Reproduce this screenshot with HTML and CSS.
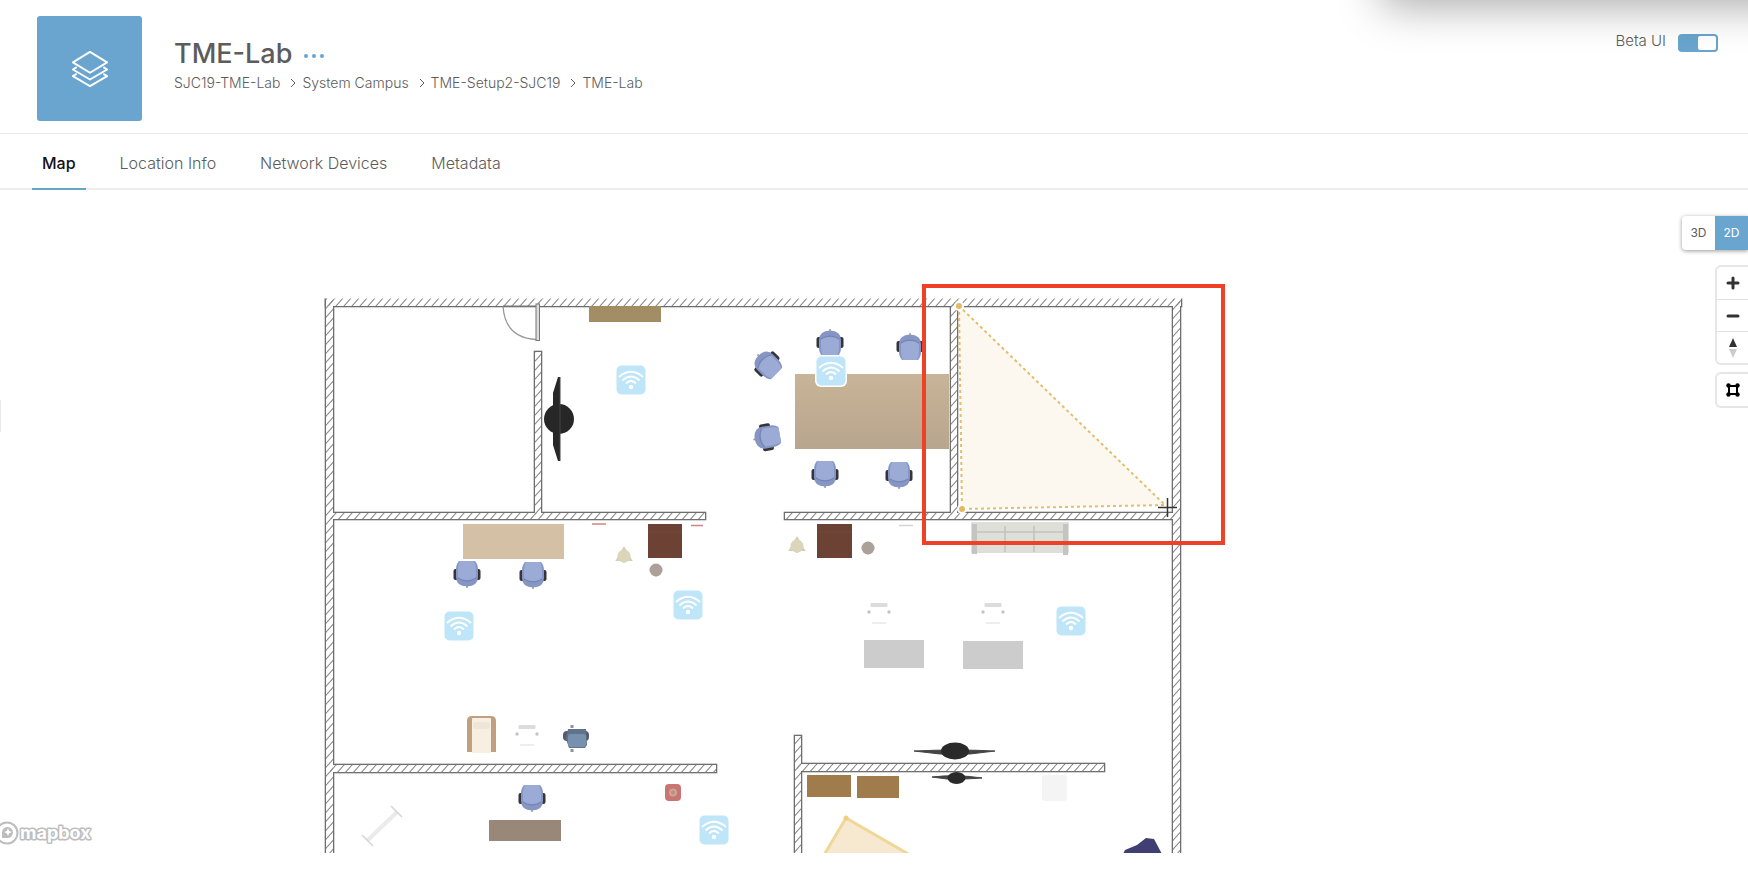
FILE: index.html
```html
<!DOCTYPE html>
<html lang="en">
<head>
<meta charset="utf-8">
<title>TME-Lab</title>
<link rel="stylesheet" href="styles.css">
</head>
<body>
<div class="page">
  <div class="shade"></div>
  <header class="header">
    <div class="tile">
      <svg width="38" height="38" viewBox="0 0 40 40" fill="none" stroke="#fff" stroke-width="2" stroke-linejoin="round">
        <path d="M20 2 38 13 20 24 2 13Z"/>
        <path d="M6 18 2 20.500 20 31 38 20.500 34 18"/>
        <path d="M6 25 2 27.500 20 38 38 27.500 34 25"/>
      </svg>
    </div>
    <div class="heading">
      <div class="title-row">
        <h1 class="title">TME-Lab</h1>
        <button class="more" type="button" aria-label="More actions"><i></i><i></i><i></i></button>
      </div>
      <nav class="crumbs" aria-label="Breadcrumb">
        <a href="#">SJC19-TME-Lab</a>
        <svg width="6" height="10" viewBox="0 0 6 10"><path d="M1 1 5 5 1 9"/></svg>
        <a href="#">System Campus</a>
        <svg width="6" height="10" viewBox="0 0 6 10"><path d="M1 1 5 5 1 9"/></svg>
        <a href="#">TME-Setup2-SJC19</a>
        <svg width="6" height="10" viewBox="0 0 6 10"><path d="M1 1 5 5 1 9"/></svg>
        <a href="#">TME-Lab</a>
      </nav>
    </div>
    <div class="beta">
      <label for="beta">Beta UI</label>
      <input id="beta" class="switch" type="checkbox" checked>
    </div>
  </header>

  <nav class="tabs">
    <a class="tab active" href="#">Map</a>
    <a class="tab" href="#">Location Info</a>
    <a class="tab" href="#">Network Devices</a>
    <a class="tab" href="#">Metadata</a>
  </nav>

  <main class="map">
    <svg class="plan" viewBox="0 190 1748 663" role="img" aria-label="Floor plan">
      <defs>
        <pattern id="hatch" width="8" height="9" patternUnits="userSpaceOnUse">
          <path d="M-1 10.125 9-1.125M-1 1.125 1-1.125M7 10.125 9 7.875" stroke="#888" stroke-width="1.100"/>
        </pattern>
        <g id="walls">
          <rect x="326" y="298" width="855" height="8"/>
          <rect x="326" y="299" width="7" height="560"/>
          <rect x="1173" y="299" width="7" height="560"/>
          <rect x="535" y="352" width="6" height="164"/>
          <rect x="951" y="302" width="6" height="214"/>
          <rect x="330" y="513" width="375" height="6"/>
          <rect x="785" y="513" width="390" height="6"/>
          <rect x="330" y="765" width="386" height="7"/>
          <rect x="795" y="736" width="6" height="124"/>
          <rect x="797" y="764" width="307" height="7"/>
        </g>
        <g id="chair">
          <rect x="-13.500" y="-4" width="5" height="11" rx="2" fill="#33353b"/>
          <rect x="8.500" y="-4" width="5" height="11" rx="2" fill="#33353b"/>
          <path d="M-8-12H8Q11-9 11-3V4Q11 13 0 13.500Q-11 13-11 4V-3Q-11-9-8-12Z" fill="#8596c4"/>
          <path d="M-7-12H7Q9-9 9-2V4Q7 7 0 7Q-7 7-9 4V-2Q-9-9-7-12Z" fill="#9babd6"/>
          <path d="M-9 5Q0 11 9 5" fill="none" stroke="#7182b3" stroke-width="1"/>
          <circle cx="0" cy="14" r="1" fill="#999"/>
        </g>
        <g id="ap">
          <rect x="-14.500" y="-14.500" width="29" height="29" rx="5" fill="#bfe5f8"/>
          <g fill="none" stroke="#fff" stroke-width="1.800" stroke-linecap="round">
            <path d="M-11.500-3.500Q0-13 11.500-3.500"/>
            <path d="M-8 0Q0-7 8 0"/>
            <path d="M-4.500 3Q0-1 4.500 3"/>
          </g>
          <circle cx="0" cy="7" r="2.200" fill="#fff"/>
        </g>
        <g id="ghost">
          <rect x="-8.500" y="-7" width="17" height="4" rx="1" fill="#dcdcdc"/>
          <circle cx="-10" cy="2" r="1.700" fill="#c4c4c4"/>
          <circle cx="10" cy="2" r="1.700" fill="#c4c4c4"/>
          <path d="M-7 13H7" fill="none" stroke="#eee" stroke-width="2"/>
        </g>
        <g id="stool">
          <path d="M0-10 3-5 8 4 9 5H4L0 7-4 5H-9L-8 4-3-5Z" fill="#d5cfb9"/>
          <circle r="6.500" fill="#ddd5ba"/>
        </g>
        <linearGradient id="wood" x1="0" y1="0" x2="0" y2="1">
          <stop offset="0" stop-color="#c8b497"/><stop offset="1" stop-color="#b8a58e"/>
        </linearGradient>
      </defs>

      <rect x="0" y="400" width="1" height="32" fill="#e8e8e8"/>

      <use href="#walls" stroke="#6e6e6e" stroke-width="2.600"/>
      <use href="#walls" fill="#fff"/>
      <use href="#walls" fill="url(#hatch)"/>
      <rect x="320" y="294" width="870" height="4.500" fill="#fff"/>

      <path d="M503 306Q505 338 536 339.500" fill="none" stroke="#999" stroke-width="1.300"/>
      <path d="M503 306H536" stroke="#777"/>
      <rect x="536" y="304" width="3.500" height="36.500" fill="#ddd" stroke="#777"/>

      <rect x="589" y="306" width="72" height="16" fill="#a38d65"/>
      <rect x="795" y="374" width="154" height="75" fill="url(#wood)"/>
      <path d="M560 377V461H558L553 445V393L558 377Z" fill="#272727"/>
      <circle cx="559" cy="419" r="15" fill="#272727"/>
      <path d="M560 377V461" stroke="#444"/>

      <use href="#chair" transform="translate(830 344) rotate(180)"/>
      <use href="#chair" transform="translate(910 348) rotate(180)"/>
      <use href="#chair" transform="translate(768 365) rotate(135)"/>
      <use href="#chair" transform="translate(768 437) rotate(80)"/>
      <use href="#chair" x="825" y="473"/>
      <use href="#chair" x="899" y="474"/>
      <use href="#chair" x="467" y="573"/>
      <use href="#chair" x="533" y="574"/>
      <use href="#chair" x="532" y="797"/>

      <rect x="463" y="524" width="101" height="35" fill="#d4c0a5"/>
      <rect x="648" y="524" width="34" height="34" fill="#6b4233"/>
      <rect x="817" y="524" width="35" height="34" fill="#6b4233"/>
      <path d="M648 532H682M817 532H852" stroke="#754939"/>
      <path d="M592 524H606M691 525.500H703" stroke="#cf8580" stroke-width="1.500"/>
      <path d="M899 525.500H913" stroke="#d4d4d4" stroke-width="1.500"/>
      <use href="#stool" x="624" y="556"/>
      <use href="#stool" x="797" y="546"/>
      <rect x="-5" y="-5" width="10" height="10" rx="2" transform="translate(656 570) rotate(45)" fill="#aca19a"/>
      <circle cx="656" cy="570" r="6.500" fill="#aca19a"/>
      <rect x="-5" y="-5" width="10" height="10" rx="2" transform="translate(868 548) rotate(45)" fill="#aca19a"/>
      <circle cx="868" cy="548" r="6.500" fill="#aca19a"/>

      <rect x="971" y="522" width="98" height="31" fill="#dedfd8"/>
      <rect x="972" y="524" width="5" height="30" fill="#c4c5c0"/>
      <rect x="1063" y="524" width="5" height="31" fill="#c4c5c0"/>
      <path d="M977 532H1063M1005 526V552M1034 526V552" stroke="#c3c4be" stroke-width="1.600"/>

      <use href="#ghost" x="879" y="610"/>
      <use href="#ghost" x="993" y="610"/>
      <use href="#ghost" x="527" y="732"/>
      <rect x="864" y="640" width="60" height="28" fill="#ccc"/>
      <rect x="963" y="641" width="60" height="28" fill="#ccc"/>

      <path d="M467 752V721Q467 716 472 716H491Q496 716 496 721V752Z" fill="#c19f81"/>
      <rect x="472" y="718" width="19" height="35" rx="1" fill="#f6efe2"/>
      <rect x="473" y="722" width="17" height="7" rx="2" fill="#eee6d8"/>
      <rect x="563" y="731" width="26" height="10" rx="4" fill="#555d69"/>
      <path d="M572 725V752" stroke="#8d939c" stroke-width="3" stroke-dasharray="3 21"/>
      <path d="M568 729H586L587 745 585 748H569L566 739Z" fill="#61738c"/>
      <rect x="568" y="734" width="18" height="13" rx="2" fill="#7790ae"/>
      <rect x="665" y="784" width="16" height="17" rx="4" fill="#c87573"/>
      <circle cx="673" cy="792.500" r="4" fill="#d6a198"/>
      <circle cx="673" cy="792.500" r="2" fill="#a89880"/>
      <rect x="489" y="820" width="72" height="21" fill="#998878"/>
      <path d="M367 841 397 812" stroke="#ebebeb" stroke-width="4"/>
      <path d="M362 835 373 846M391 806 402 817" stroke="#d6d6d6" stroke-width="1.500"/>

      <path d="M914 751Q935 750 955 750Q975 750 995 751L970 754H940Z" fill="#444" stroke="#444"/>
      <ellipse cx="955" cy="751" rx="14" ry="8.500" fill="#2a2a2a"/>
      <path d="M932 777Q956 774 982 778L965 779H947Z" fill="#444" stroke="#444"/>
      <ellipse cx="956.500" cy="778" rx="9" ry="6" fill="#2a2a2a"/>
      <rect x="807" y="775" width="44" height="22" fill="#a07b4c"/>
      <rect x="857" y="776" width="42" height="22" fill="#a07b4c"/>
      <rect x="1042" y="775" width="25" height="26" rx="3" fill="#f4f4f4"/>
      <path d="M824 855 846 818 910 855" fill="#f6e9cf" stroke="#efd798" stroke-width="3"/>
      <circle cx="846" cy="818" r="2.500" fill="#efcf80"/>
      <path d="M1123 854 1125 850 1137 845 1146 838 1154 839 1162 854Z" fill="#413e73"/>

      <use href="#ap" x="631" y="380"/>
      <rect x="815" y="355" width="32" height="32" rx="6" fill="#fff"/>
      <use href="#ap" x="831" y="371"/>
      <use href="#ap" x="459" y="626"/>
      <use href="#ap" x="688" y="605"/>
      <use href="#ap" x="1071" y="621"/>
      <use href="#ap" x="714" y="830"/>

      <path d="M959 306 962 509 1165 505Z" fill="#fdf8ef" stroke="#e3bd6c" stroke-width="2" stroke-dasharray="3 3"/>
      <circle cx="959" cy="306" r="4" fill="#e6b861" stroke="#fff" stroke-width="2"/>
      <circle cx="962" cy="509" r="4" fill="#e6b861" stroke="#fff" stroke-width="2"/>
      <path d="M1158 507.500H1177M1167.500 498V517" stroke="#333" stroke-width="1.500"/>
      <rect x="924" y="286" width="299" height="257" fill="none" stroke="#ee4128" stroke-width="4"/>
    </svg>

    <div class="controls">
      <div class="dims">
        <button type="button">3D</button>
        <button type="button" class="on">2D</button>
      </div>
      <div class="group">
        <button type="button" aria-label="Zoom in"><svg width="14" height="14" viewBox="0 0 14 14"><path d="M7 2V12M2 7H12" stroke="#333" stroke-width="3" stroke-linecap="round"/></svg></button>
        <button type="button" aria-label="Zoom out"><svg width="14" height="14" viewBox="0 0 14 14"><path d="M2 7H12" stroke="#333" stroke-width="3" stroke-linecap="round"/></svg></button>
        <button type="button" aria-label="Reset north"><svg width="10" height="20" viewBox="0 0 10 20"><path d="M5 0 9 9H1Z" fill="#333"/><path d="M5 20 9 11H1Z" fill="#ccc"/></svg></button>
      </div>
      <div class="group">
        <button type="button" aria-label="Draw polygon"><svg width="14" height="14" viewBox="0 0 14 14"><path d="M3 3H11V11H3Z" fill="none" stroke="#000" stroke-width="2"/><g fill="#000"><circle cx="2.500" cy="2.500" r="2.200"/><circle cx="11.500" cy="2.500" r="2.200"/><circle cx="2.500" cy="11.500" r="2.200"/><circle cx="11.500" cy="11.500" r="2.200"/></g></svg></button>
      </div>
    </div>

    <a class="logo" href="#" aria-label="mapbox">
      <svg width="92" height="26" viewBox="0 0 92 26">
        <circle cx="7" cy="13" r="10.500" fill="#fff" stroke="#bdbdbd" stroke-width="2"/>
        <path d="M2 18V12A5.500 5.500 0 1 1 8 18Z" fill="#bdbdbd"/>
        <path d="M8 8 9.200 11 12 12 9.200 13.200 8 16 6.800 13.200 4 12 6.800 11Z" fill="#fff"/>
        <text class="logo-text" x="20" y="19">mapbox</text>
      </svg>
    </a>
  </main>
</div>
</body>
</html>
```
FILE: styles.css
```css
* { box-sizing: border-box; }

body {
  margin: 0;
  background: #fff;
  color: #5c5c5c;
  font-family: Inter, "Liberation Sans", sans-serif;
}

.page {
  position: relative;
  min-height: 100vh;
  overflow: hidden;
}

button {
  margin: 0;
  padding: 0;
  border: 0;
  background: none;
  font: inherit;
  color: inherit;
}

a { color: inherit; text-decoration: none; }

.shade {
  position: absolute;
  top: -60px;
  left: 79%;
  right: -60px;
  height: 60px;
  border-radius: 12px;
  box-shadow: 0 6px 44px rgba(0, 0, 0, 0.34);
}

.header {
  display: flex;
  align-items: flex-start;
  padding: 16px 30px 12px 37px;
  border-bottom: 1px solid #e8e8e8;
}

.tile {
  display: grid;
  place-items: center;
  width: 105px;
  height: 105px;
  border-radius: 3px;
  background: #69a5cf;
}

.heading { margin-left: 32px; padding-top: 20px; }

.title-row { display: flex; align-items: center; gap: 12px; }

.title {
  margin: 0;
  font-size: 27px;
  font-weight: 500;
  line-height: 36px;
}

.more { display: flex; gap: 4px; padding-top: 4px; }

.more i {
  width: 4px;
  height: 4px;
  border-radius: 50%;
  background: #69a5cf;
}

.crumbs {
  display: flex;
  align-items: center;
  gap: 6px;
  font-size: 14px;
  font-weight: 300;
  line-height: 22px;
}

.crumbs svg { fill: none; stroke: #5c5c5c; margin-left: 4px; }

.beta {
  display: flex;
  align-items: flex-start;
  gap: 12px;
  margin-left: auto;
  padding-top: 15px;
  font-size: 15px;
  font-weight: 300;
  line-height: 20px;
}

.switch {
  appearance: none;
  display: flex;
  justify-content: flex-end;
  width: 40px;
  height: 18px;
  margin: 3px 0 0;
  padding: 2px;
  border-radius: 4px;
  background: #69a5cf;
}

.switch::before {
  content: "";
  width: 18px;
  border-radius: 2px;
  background: #fff;
}

.tabs {
  display: flex;
  gap: 24px;
  padding-left: 32px;
  border-bottom: 2px solid #ececec;
}

.tab {
  margin-bottom: -2px;
  padding: 19px 10px 15px;
  border-bottom: 2px solid transparent;
  font-size: 16px;
  font-weight: 300;
  line-height: 20px;
}

.tab.active {
  border-color: #69a5c4;
  color: #111;
  font-weight: 500;
}

.map { position: relative; }

.plan { display: block; width: 100%; height: auto; }

.controls {
  position: absolute;
  top: 26px;
  right: 0;
  display: flex;
  flex-direction: column;
  align-items: flex-end;
}

.dims {
  display: flex;
  margin-bottom: 15px;
  border-radius: 4px 0 0 4px;
  background: #fff;
  box-shadow: 0 1px 4px rgba(0, 0, 0, 0.4);
  font-size: 12px;
  line-height: 34px;
}

.dims button { width: 33px; }

.dims .on { background: #69a5cf; color: #fff; }

.group {
  display: flex;
  flex-direction: column;
  margin-bottom: 7px;
  border: 2px solid #e6e6e6;
  border-right: 0;
  border-radius: 6px 0 0 6px;
  background: #fff;
}

.group button {
  display: grid;
  place-items: center;
  width: 31px;
  height: 32px;
}

.group button + button { border-top: 1px solid #e0e0e0; }

.logo {
  position: absolute;
  bottom: 7px;
  left: 0;
}

.logo svg { display: block; }

.logo-text {
  fill: #fff;
  stroke: #bdbdbd;
  stroke-width: 3px;
  stroke-linejoin: round;
  paint-order: stroke;
  font-size: 18px;
  font-weight: 700;
}
```
